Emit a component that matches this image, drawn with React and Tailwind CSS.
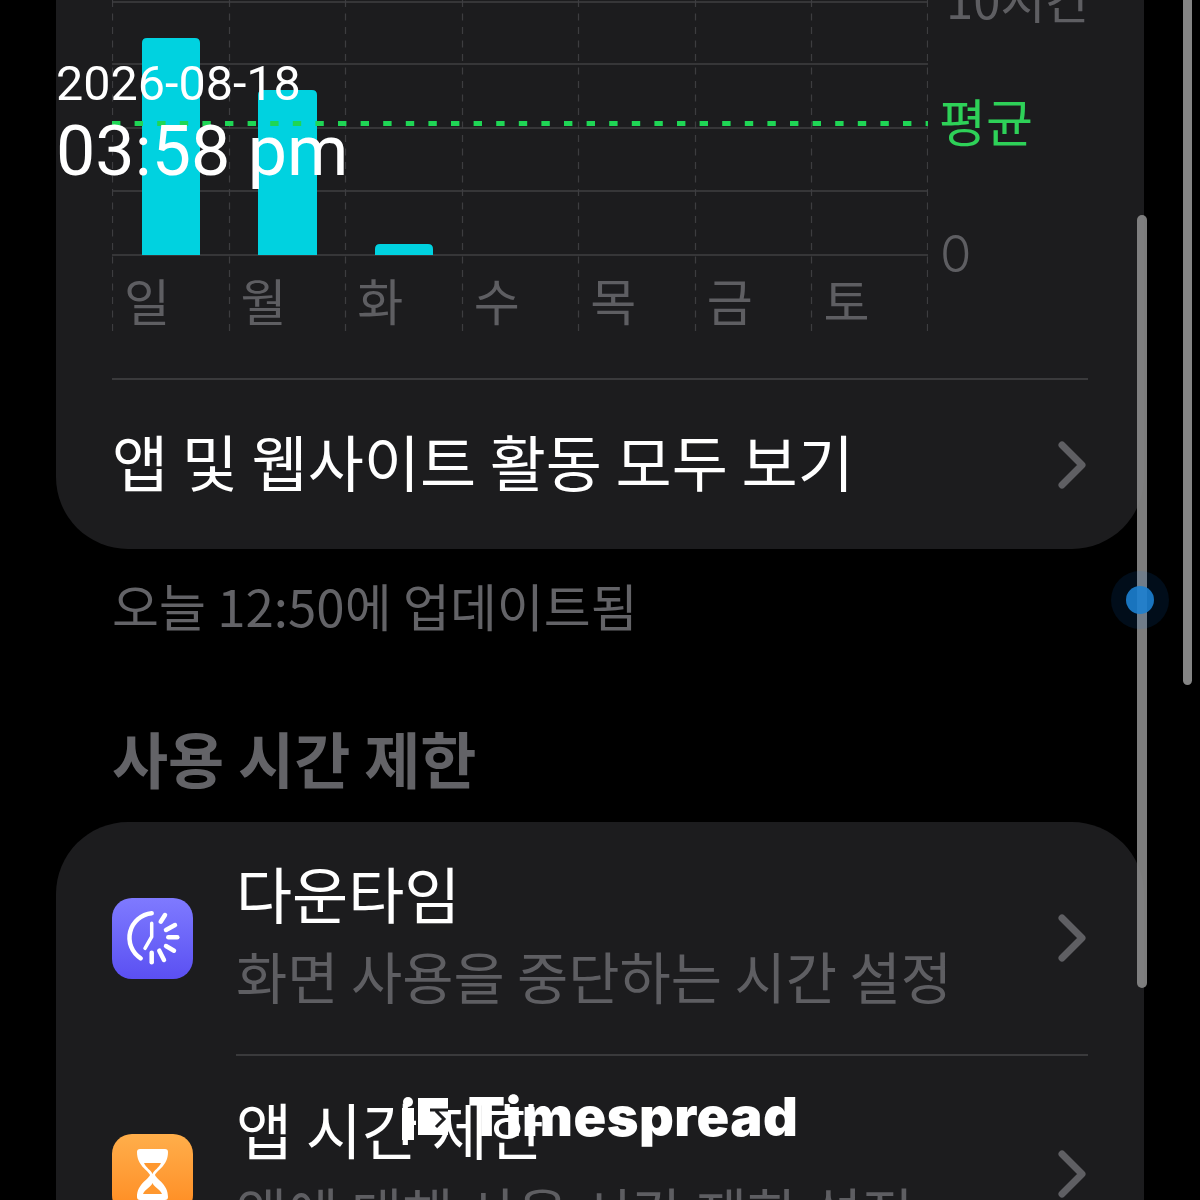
import React from "react";

const KR = "font-['Noto_Sans_CJK_KR',sans-serif]";
const days = ["일", "월", "화", "수", "목", "금", "토"];
const gridY = [2, 64, 128, 191, 255];
const gridX = [0, 117, 233, 350, 466, 583, 699, 815];
const bars = [
  { x: 30, y: 38, w: 58 },
  { x: 146, y: 90, w: 59 },
  { x: 263, y: 244, w: 58 },
];

function Chevron() {
  return (
    <svg width="32" height="48" viewBox="0 0 32 48" fill="none" className="shrink-0">
      <path d="M6 4 L26 24 L6 44" stroke="#5f5f63" strokeWidth="7" strokeLinecap="round" strokeLinejoin="round" />
    </svg>
  );
}

function Chart() {
  return (
    <div className="flex h-[333px]">
      <div className="relative w-[816px]">
        <svg width="816" height="333" viewBox="0 0 816 333" className="absolute left-0 top-0">
          {gridX.map((x) => (
            <line key={x} x1={x + 0.5} x2={x + 0.5} y1="0" y2="333" stroke="#3d3d40" strokeWidth="1.2" strokeDasharray="7 6.500" />
          ))}
          {gridY.map((y) => (
            <line key={y} x1="0" x2="816" y1={y} y2={y} stroke="#3f3f42" strokeWidth="1.5" />
          ))}
          {bars.map((b) => (
            <path
              key={b.x}
              d={`M${b.x} 255 V${b.y + 5} Q${b.x} ${b.y} ${b.x + 5} ${b.y} H${b.x + b.w - 5} Q${b.x + b.w} ${b.y} ${b.x + b.w} ${b.y + 5} V255 Z`}
              fill="#00d2e0"
            />
          ))}
          <line x1="0" x2="816" y1="123.500" y2="123.500" stroke="#1fd655" strokeWidth="5" strokeDasharray="8.4 14.2" />
        </svg>
        <div className="relative grid grid-cols-7 pt-[260px] text-[50px] leading-[78px] text-[#5e5e62]">
          {days.map((d) => (
            <div key={d} className="pl-[12px]">{d}</div>
          ))}
        </div>
      </div>
      <div className="relative flex-1 text-[51px] text-[#5e5e62]">
        <div className="absolute left-[18px] top-[-30px] whitespace-nowrap text-[49px] leading-[56px]">10시간</div>
        <div className="absolute left-[11px] top-[92px] leading-[56px] text-[#2ed158]">평균</div>
        <div className="absolute left-[12px] top-[226px] leading-[56px] font-['Inter',sans-serif] font-light">0</div>
      </div>
    </div>
  );
}

function DowntimeIcon() {
  return (
    <div className="h-[81px] w-[81px] rounded-[20px] bg-gradient-to-b from-[#7f7aff] to-[#5b4ff2] shrink-0">
      <svg width="81" height="81" viewBox="0 0 81 81" fill="none" stroke="#fff" strokeWidth="4.5" strokeLinecap="round">
        <path d="M39.700 15.300 A24.500 24.500 0 0 0 28.700 60.300" />
        <path d="M39.700 25.300 V38.700 L33 50.300" strokeWidth="3.5" />
        <path d="M48.700 23.700 L53 17" />
        <path d="M54 32 L63 27" />
        <path d="M56.300 39.300 H65.300" />
        <path d="M54 48 L62 52.700" />
        <path d="M47.300 52.700 L52 62" />
        <path d="M39.700 54.700 V64.300" />
      </svg>
    </div>
  );
}

function HourglassIcon() {
  return (
    <div className="h-[81px] w-[81px] rounded-[20px] bg-gradient-to-b from-[#ffae4a] to-[#ff8a1c] shrink-0">
      <svg width="81" height="81" viewBox="0 0 81 81" fill="none">
        <path
          d="M25 18 Q25 15 28 15 H53 Q56 15 56 18 C56 32 45 36 43 41 C45 46 56 50 56 63 Q56 66 53 66 H28 Q25 66 25 63 C25 50 36 46 38 41 C36 36 25 32 25 18 Z"
          fill="#fff"
        />
        <path d="M32 29 H49 C47 34 42 36 40.500 40 C39 36 34 34 32 29 Z" fill="#ff982f" />
        <path d="M40.500 49 C42 53 48 55 50 60 H31 C33 55 39 53 40.500 49 Z" fill="#ff982f" />
      </svg>
    </div>
  );
}

function LimitRow({ icon, title, sub, height }) {
  return (
    <div className="flex items-stretch">
      <div className="flex w-[124px] items-center shrink-0">{icon}</div>
      <div className="flex flex-1 items-center justify-between" style={{ height }}>
        <div className="pb-[8px]">
          <div className="text-[61px] leading-[82px] text-white">{title}</div>
          <div className="text-[55.7px] leading-[82px] text-[#5e5e62]">{sub}</div>
        </div>
        <Chevron />
      </div>
    </div>
  );
}

function LogoMark() {
  return (
    <svg width="50" height="50" viewBox="0 0 50 50" className="shrink-0">
      <circle cx="8" cy="10" r="5" fill="#fff" />
      <path d="M2 16 H14 V48 H2 Z" fill="#fff" />
      <path d="M18 6 H48 V43 H18 Z" fill="#fff" />
      <path d="M30 18 H48 M36 19 L44 27 L36 35" stroke="#1c1c1e" strokeWidth="3" fill="none" />
    </svg>
  );
}

export default function App() {
  return (
    <div className={`relative h-[1200px] w-[1200px] overflow-hidden bg-black ${KR}`}>
      <div className="ml-[56px] w-[1088px]">
        <section className="rounded-b-[72px] bg-[#1c1c1e] px-[56px]">
          <Chart />
          <div className="mt-[45px] border-t-2 border-[#3a3a3c]" />
          <div className="flex h-[169px] items-center justify-between">
            <div className="pb-[8px] text-[61px] leading-[80px] text-white">앱 및 웹사이트 활동 모두 보기</div>
            <Chevron />
          </div>
        </section>

        <p className="mt-[25px] pl-[56px] text-[51px] leading-[62px] text-[#636367]">오늘 12:50에 업데이트됨</p>

        <h2 className="mt-[90px] pl-[56px] text-[61px] font-bold leading-[64px] text-[#636367]">사용 시간 제한</h2>

        <section className="mt-[32px] rounded-t-[72px] bg-[#1c1c1e] px-[56px] pb-[60px]">
          <LimitRow icon={<DowntimeIcon />} title="다운타임" sub="화면 사용을 중단하는 시간 설정" height={232} />
          <div className="ml-[124px] border-t-2 border-[#3a3a3c]" />
          <LimitRow icon={<HourglassIcon />} title="앱 시간 제한" sub="앱에 대해 사용 시간 제한 설정" height={236} />
        </section>
      </div>

      {/* scroll indicators and the dot over the page */}
      <div className="absolute left-[1137px] top-[215px] h-[773px] w-[10px] rounded-full bg-[#8a8a8a]/90" />
      <div className="absolute left-[1183px] top-[-20px] h-[705px] w-[9px] rounded-full bg-[#858585]" />
      <div className="absolute left-[1111px] top-[571px] flex h-[58px] w-[58px] items-center justify-center rounded-full bg-[#0a84ff]/10">
        <div className="h-[28px] w-[28px] rounded-full bg-[#1c7fd0]/90" />
      </div>

      {/* camera watermark */}
      <div className="absolute left-[56px] top-[57px] font-['Roboto',sans-serif] font-normal text-white">
        <div className="text-[48.5px] leading-[54px]">2026-08-18</div>
        <div className="text-[70px] leading-[80px]">03:58 pm</div>
      </div>
      <div className="absolute left-[400px] top-[1092px] flex items-start font-['Inter',sans-serif] text-[54px] font-black leading-[50px] tracking-[0.5px] text-white">
        <LogoMark />
        <span className="ml-[18px]">Timespread</span>
      </div>
    </div>
  );
}
